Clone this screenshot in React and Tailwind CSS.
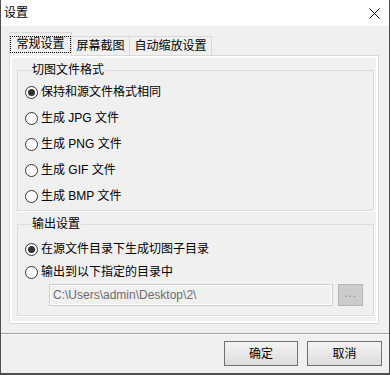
import React from 'react';

const FONT = "font-[family-name:'Liberation_Sans','Noto_Sans_CJK_SC',sans-serif]";

function Radio({ checked, label }) {
  return (
    <div className="flex items-center gap-[3px] h-full">
      <span className="w-[13px] h-[13px] rounded-full border border-[#333] bg-white flex items-center justify-center shrink-0">
        {checked && <span className="w-[7px] h-[7px] rounded-full bg-[#333]" />}
      </span>
      <span className="text-[12px] leading-[16px] text-black">{label}</span>
    </div>
  );
}

function GroupBox({ title, className = '', children }) {
  return (
    <fieldset
      className={`border border-[#dcdcdc] shadow-[1px_1px_0_#ffffff] pl-[7px] pr-[7px] ${className}`}
    >
      <legend className="ml-[6px] px-[1px] text-[12px] leading-[16px] text-black">
        {title}
      </legend>
      {children}
    </fieldset>
  );
}

const formats = [
  { label: '保持和源文件格式相同', checked: true },
  { label: '生成 JPG 文件' },
  { label: '生成 PNG 文件' },
  { label: '生成 GIF 文件' },
  { label: '生成 BMP 文件' },
];

export default function App() {
  return (
    <div
      className={`w-[390px] h-[375px] bg-[#f0f0f0] border-x border-b-2 border-[#4f4f4f] flex flex-col ${FONT}`}
    >
      {/* title bar */}
      <div className="h-[26px] bg-white flex items-center justify-between pl-[3px] pr-[9px]">
        <span className="text-[12px] leading-[16px] text-black">设置</span>
        <svg width="11" height="11" viewBox="0 0 11 11" aria-hidden="true">
          <path d="M0.5 0.5 L10.5 10.5 M10.5 0.5 L0.5 10.5" stroke="#111" strokeWidth="1" />
        </svg>
      </div>

      {/* body */}
      <div className="pl-[8px] pt-[6px]">
        <div className="flex items-end h-[23px] relative z-10">
          <div className="w-[63px] h-[24px] -mb-px border-x border-t border-[#d9d9d9] bg-[#f0f0f0] flex items-start justify-center pt-[3px]">
            <span className="border border-dotted border-black px-[5px] text-[12px] leading-[15px] text-black">
              常规设置
            </span>
          </div>
          <div className="w-[58px] h-[19px] border-t border-r border-[#d9d9d9] bg-[#f0f0f0] flex items-center justify-center text-[12px] leading-[16px] text-black">
            屏幕截图
          </div>
          <div className="w-[82px] h-[19px] border-t border-r border-[#d9d9d9] bg-[#f0f0f0] flex items-center justify-center text-[12px] leading-[16px] text-black">
            自动缩放设置
          </div>
        </div>

        <div className="w-[370px] border border-[#d9d9d9]">
          <div className="border-2 border-white pt-[4px] pl-[5px] pr-[2px] pb-[5px]">
            <GroupBox title="切图文件格式" className="pt-[1px] pb-[1px]">
              {formats.map(f => (
                <div key={f.label} className="h-[26px]">
                  <Radio checked={f.checked} label={f.label} />
                </div>
              ))}
            </GroupBox>

            <GroupBox title="输出设置" className="mt-[5px] pt-[4px] pb-[9px]">
              <div className="h-[26px]">
                <Radio checked label="在源文件目录下生成切图子目录" />
              </div>
              <div className="h-[20px]">
                <Radio label="输出到以下指定的目录中" />
              </div>
              <div className="flex mt-[2px] ml-[24px] gap-[5px]">
                <div className="w-[284px] h-[22px] border border-[#cfcfcf] bg-[#f0f0f0] shadow-[inset_0_0_0_1px_#ffffff] flex items-center pl-[3px] text-[12px] leading-[16px] text-[#6d6d6d]">
                  C:\Users\admin\Desktop\2\
                </div>
                <div className="w-[25px] h-[22px] border border-[#b5b5b5] bg-[#cccccc] flex items-center justify-center text-[12px] leading-[12px] text-[#7d8fa8] tracking-[1px] pb-[4px]">
                  ...
                </div>
              </div>
            </GroupBox>
          </div>
        </div>
      </div>

      {/* footer */}
      <div className="mt-[9px] border-t border-[#a0a0a0]">
        <div className="border-t border-white flex justify-end gap-[9px] pt-[6px] pr-[7px]">
          <button
            type="button"
            className="w-[74px] h-[25px] border border-[#707070] bg-linear-to-b from-[#f4f4f4] to-[#dddddd] text-[12px] leading-[16px] text-black"
          >
            确定
          </button>
          <button
            type="button"
            className="w-[75px] h-[25px] border border-[#707070] bg-linear-to-b from-[#f4f4f4] to-[#dddddd] text-[12px] leading-[16px] text-black"
          >
            取消
          </button>
        </div>
      </div>
    </div>
  );
}
